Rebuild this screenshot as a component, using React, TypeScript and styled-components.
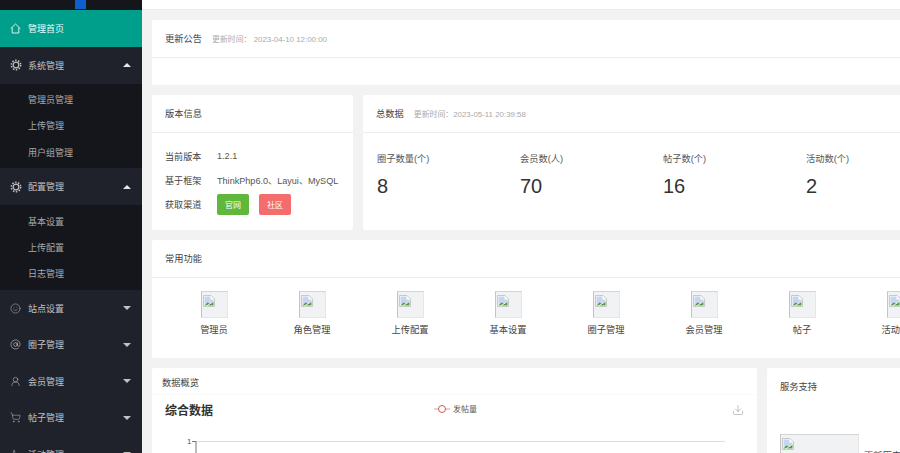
import React from 'react';
import styled, { createGlobalStyle } from 'styled-components';
import { Download, ShoppingCart, AtSign, UserRound, Smile, Activity } from 'lucide-react';

const GlobalStyle = createGlobalStyle`
    html, body {
        margin: 0;
        height: 100%;
        overflow: hidden;
        background: #f2f2f2;
    }
    body {
        font-family: "Liberation Sans", "Noto Sans CJK SC", sans-serif;
        color: #333;
    }
    * {
        box-sizing: border-box;
    }
`;

type MenuGroup = {
    title: string
    icon: React.ReactNode
    open?: boolean
    children?: string[]
}

const HomeIcon = () => (
    <svg width="11" height="11" viewBox="0 0 11 11" fill="none" stroke="currentColor" strokeWidth="0.9">
        <path d="M0.7 5.6L5.5 1l4.8 4.6M2.2 4.6V10h6.6V4.6" />
    </svg>
);

const GearIcon = () => (
    <svg width="12" height="12" viewBox="0 0 12 12" fill="none" stroke="currentColor">
        <circle cx="6" cy="6" r="4.7" strokeWidth="1.5" strokeDasharray="1.5 1.45" />
        <circle cx="6" cy="6" r="2.8" strokeWidth="1.2" />
    </svg>
);

const menu: MenuGroup[] = [
    { title: '系统管理', icon: <GearIcon />, open: true, children: ['管理员管理', '上传管理', '用户组管理'] },
    { title: '配置管理', icon: <GearIcon />, open: true, children: ['基本设置', '上传配置', '日志管理'] },
    { title: '站点设置', icon: <Smile size={11} strokeWidth={1.1} /> },
    { title: '圈子管理', icon: <AtSign size={11} strokeWidth={1.4} /> },
    { title: '会员管理', icon: <UserRound size={11} strokeWidth={1.2} /> },
    { title: '帖子管理', icon: <ShoppingCart size={11} strokeWidth={1.1} /> },
    { title: '活动管理', icon: <Activity size={11} strokeWidth={1.1} /> },
];

const stats = [
    { label: '圈子数量(个)', value: '8' },
    { label: '会员数(人)', value: '70' },
    { label: '帖子数(个)', value: '16' },
    { label: '活动数(个)', value: '2' },
];

const shortcuts = ['管理员', '角色管理', '上传配置', '基本设置', '圈子管理', '会员管理', '帖子', '活动管理'];

const BrokenImage = ({ wide }: { wide?: boolean }) => (
    <Placeholder $wide={wide}>
        <svg width="12" height="12" viewBox="0 0 12 12">
            <path d="M0.5 0.5h7.5l3.5 3.5v7.5h-11z" fill="#fff" stroke="#b4b4b4" strokeWidth="0.7" />
            <path d="M1.5 1.5h6v3h3v1.5l-4 2-5 2z" fill="#c5d6ee" />
            <path d="M1 11l3.5-3.5 2 1 4-2.5v4.6H1z" fill="#4f9d3e" />
            <path d="M3.5 11l7-4.5" stroke="#fff" strokeWidth="0.9" />
        </svg>
    </Placeholder>
);

export default function App() {
    return (
        <Page>
            <GlobalStyle />
            <Sidebar>
                <Logo>
                    <LogoMark />
                </Logo>
                <HomeItem>
                    <MenuIcon><HomeIcon /></MenuIcon>
                    管理首页
                </HomeItem>
                {menu.map(group => (
                    <div key={group.title}>
                        <MenuItem>
                            <MenuIcon>{group.icon}</MenuIcon>
                            <MenuTitle>{group.title}</MenuTitle>
                            <Caret $open={group.open} />
                        </MenuItem>
                        {group.children && (
                            <SubMenu>
                                {group.children.map(child => <SubItem key={child}>{child}</SubItem>)}
                            </SubMenu>
                        )}
                    </div>
                ))}
            </Sidebar>
            <Main>
                <TopBar />
                <Content>
                    <Card>
                        <CardHeader>
                            <CardTitle>更新公告</CardTitle>
                            <CardTime>更新时间： 2023-04-10 12:00:00</CardTime>
                        </CardHeader>
                        <NoticeBody />
                    </Card>
                    <InfoRow>
                        <Card>
                            <CardHeader>
                                <CardTitle>版本信息</CardTitle>
                            </CardHeader>
                            <VersionBody>
                                <VersionRow>
                                    <VersionLabel>当前版本</VersionLabel>
                                    <span>1.2.1</span>
                                </VersionRow>
                                <VersionRow>
                                    <VersionLabel>基于框架</VersionLabel>
                                    <span>ThinkPhp6.0、Layui、MySQL</span>
                                </VersionRow>
                                <VersionRow>
                                    <VersionLabel>获取渠道</VersionLabel>
                                    <ChannelButton $color="#5fb83c">官网</ChannelButton>
                                    <ChannelButton $color="#f56c6c">社区</ChannelButton>
                                </VersionRow>
                            </VersionBody>
                        </Card>
                        <Card>
                            <CardHeader>
                                <CardTitle>总数据</CardTitle>
                                <CardTime>更新时间：2023-05-11 20:39:58</CardTime>
                            </CardHeader>
                            <StatsBody>
                                {stats.map(item => (
                                    <div key={item.label}>
                                        <StatLabel>{item.label}</StatLabel>
                                        <StatValue>{item.value}</StatValue>
                                    </div>
                                ))}
                            </StatsBody>
                        </Card>
                    </InfoRow>
                    <Card>
                        <CardHeader>
                            <CardTitle>常用功能</CardTitle>
                        </CardHeader>
                        <ShortcutGrid>
                            {shortcuts.map(name => (
                                <Shortcut key={name}>
                                    <BrokenImage />
                                    <ShortcutName>{name}</ShortcutName>
                                </Shortcut>
                            ))}
                        </ShortcutGrid>
                    </Card>
                    <BottomRow>
                        <OverviewCard>
                            <OverviewHeader>数据概览</OverviewHeader>
                            <ChartHead>
                                <ChartTitle>综合数据</ChartTitle>
                                <Legend>
                                    <svg width="16" height="8" viewBox="0 0 16 8">
                                        <path d="M0 4h16" stroke="#c98a8a" strokeWidth="0.8" />
                                        <circle cx="8" cy="4" r="3.5" fill="#fff" stroke="#c23531" strokeWidth="0.8" />
                                    </svg>
                                    发帖量
                                </Legend>
                                <ChartTool><Download size={12} strokeWidth={1} /></ChartTool>
                            </ChartHead>
                            <Chart>
                                <svg width="605" height="20" viewBox="0 0 605 20">
                                    <text x="35" y="7" fontSize="8" fill="#555" fontFamily="Liberation Sans">1</text>
                                    <path d="M44 4.5h529" stroke="#ddd" strokeWidth="1" />
                                    <path d="M40 4.5h4V20" fill="none" stroke="#555" strokeWidth="0.8" />
                                </svg>
                            </Chart>
                        </OverviewCard>
                        <SupportCard>
                            <SupportHeader>服务支持</SupportHeader>
                            <SupportBody>
                                <BrokenImage wide />
                                <SupportText>更新历史</SupportText>
                            </SupportBody>
                        </SupportCard>
                    </BottomRow>
                </Content>
            </Main>
        </Page>
    );
}

const Page = styled.div`
    display: flex;
    width: 900px;
    height: 453px;
    overflow: hidden;
`;

const Sidebar = styled.aside`
    flex: 0 0 142px;
    height: 453px;
    overflow: hidden;
    background: #1f222b;
    color: #c2c2c2;
    font-size: 9px;
`;

const Logo = styled.div`
    display: flex;
    justify-content: center;
    height: 10px;
    padding-left: 19px;
    background: #14161c;
`;

const LogoMark = styled.div`
    width: 11px;
    height: 9px;
    background: #0d5fd0;
`;

const HomeItem = styled.div`
    display: flex;
    align-items: center;
    height: 37px;
    padding-left: 10px;
    background: #009f8c;
    color: #eefaf8;
`;

const MenuItem = styled.div`
    display: flex;
    align-items: center;
    height: 36.5px;
    padding: 0 10px;
`;

const MenuIcon = styled.span`
    display: flex;
    width: 18px;
`;

const MenuTitle = styled.span`
    flex: 1;
`;

const Caret = styled.i<{ $open?: boolean }>`
    width: 0;
    height: 0;
    margin-right: 1px;
    border-left: 4px solid transparent;
    border-right: 4px solid transparent;
    border-top: ${props => (props.$open ? '0' : '4px solid #c2c2c2')};
    border-bottom: ${props => (props.$open ? '4px solid #e6e6e6' : '0')};
`;

const SubMenu = styled.div`
    padding: 3px 0;
    background: #14161c;
`;

const SubItem = styled.div`
    display: flex;
    align-items: center;
    height: 26.33px;
    padding-left: 28px;
    color: #a9a9a9;
`;

const Main = styled.main`
    flex: 0 0 auto;
    width: 758px;
`;

const TopBar = styled.div`
    height: 10px;
    background: #fff;
    border-bottom: 1px solid #ececec;
`;

const Content = styled.div`
    display: flex;
    flex-direction: column;
    gap: 10.5px;
    width: 780px;
    padding: 10px 0 0 10px;
`;

const Card = styled.section`
    background: #fff;
    border-radius: 2px;
`;

const CardHeader = styled.header`
    display: flex;
    align-items: center;
    gap: 10px;
    height: 37.5px;
    padding-left: 13px;
    border-bottom: 1px solid #ececec;
`;

const CardTitle = styled.h2`
    margin: 0;
    font-size: 9.25px;
    font-weight: 400;
    color: #444;
`;

const CardTime = styled.span`
    font-size: 7.9px;
    color: #aaa;
`;

const NoticeBody = styled.div`
    height: 27px;
`;

const InfoRow = styled.div`
    display: grid;
    grid-template-columns: 201px 1fr;
    gap: 10px;
`;

const VersionBody = styled.div`
    display: flex;
    flex-direction: column;
    gap: 3px;
    height: 97px;
    padding: 13px 0 0 13px;
    font-size: 9.1px;
    color: #555;
`;

const VersionRow = styled.div`
    display: flex;
    align-items: center;
    min-height: 21px;
`;

const VersionLabel = styled.span`
    width: 52px;
    color: #444;
`;

const ChannelButton = styled.span<{ $color: string }>`
    display: flex;
    align-items: center;
    justify-content: center;
    width: 32px;
    height: 21px;
    margin-right: 10px;
    border-radius: 2px;
    background: ${props => props.$color};
    color: #fff;
    font-size: 8px;
`;

const StatsBody = styled.div`
    display: grid;
    grid-template-columns: repeat(4, 143px);
    padding: 18px 0 0 14px;
    height: 97px;
`;

const StatLabel = styled.div`
    font-size: 9.25px;
    color: #555;
`;

const StatValue = styled.div`
    margin-top: 10px;
    font-size: 20px;
    color: #333;
`;

const ShortcutGrid = styled.div`
    display: grid;
    grid-template-columns: repeat(8, 98px);
    height: 80px;
    padding: 13px 0 0 13px;
`;

const Shortcut = styled.div`
    display: flex;
    flex-direction: column;
    align-items: center;
`;

const Placeholder = styled.div<{ $wide?: boolean }>`
    width: ${props => (props.$wide ? '79px' : '27px')};
    height: ${props => (props.$wide ? '40px' : '27px')};
    flex: none;
    padding: 1px;
    background: #f1f2f3;
    border: 1px solid #e6e6e6;
    border-left-color: #c4c4c4;
    border-top-color: #d4d4d4;
`;

const ShortcutName = styled.span`
    margin-top: 4px;
    font-size: 9.25px;
    color: #444;
`;

const BottomRow = styled.div`
    display: grid;
    grid-template-columns: 605px 1fr;
    gap: 10px;
`;

const OverviewCard = styled(Card)`
    height: 90px;
`;

const OverviewHeader = styled.div`
    height: 27px;
    padding: 7px 0 0 10px;
    border-bottom: 1px solid #fafafa;
    font-size: 9.25px;
    color: #444;
`;

const ChartHead = styled.div`
    display: flex;
    height: 42px;
    padding: 6px 13px 0 13px;
`;

const ChartTitle = styled.div`
    width: 269px;
    font-size: 12px;
    font-weight: 700;
    color: #333;
`;

const Legend = styled.div`
    display: flex;
    flex: 1;
    align-items: center;
    align-self: flex-start;
    gap: 3px;
    height: 13px;
    margin-top: 1px;
    font-size: 8px;
    color: #555;
`;

const ChartTool = styled.span`
    color: #888;
    margin-top: 1px;
`;

const Chart = styled.div`
    height: 20px;
`;

const SupportCard = styled(Card)`
    height: 90px;
`;

const SupportHeader = styled.div`
    height: 27px;
    padding: 11px 0 0 13px;
    font-size: 9.25px;
    color: #444;
`;

const SupportBody = styled.div`
    display: flex;
    align-items: flex-start;
    gap: 5px;
    padding: 39px 0 0 13px;
`;

const SupportText = styled.span`
    margin-top: 14px;
    font-size: 9.25px;
    color: #444;
`;
